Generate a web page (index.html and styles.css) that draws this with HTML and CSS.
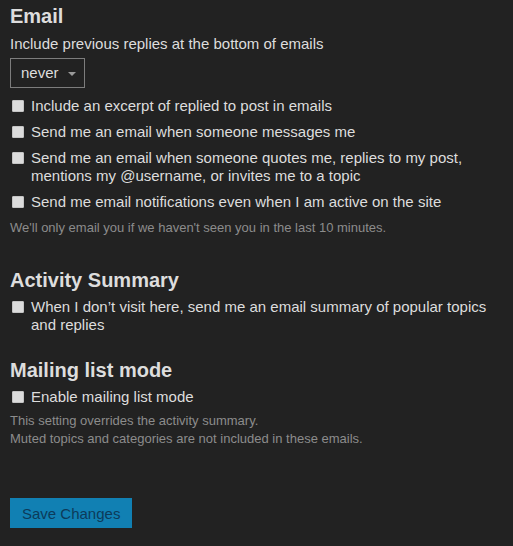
FILE: index.html
```html
<!DOCTYPE html>
<html>
<head>
<meta charset="utf-8">
<link rel="stylesheet" href="styles.css">
</head>
<body>
<div class="page">
  <h2 class="title first">Email</h2>
  <div class="label">Include previous replies at the bottom of emails</div>
  <div class="select">never <span class="caret"></span></div>
  <div class="rows">
    <label class="row"><span class="box"></span><span>Include an excerpt of replied to post in emails</span></label>
    <label class="row"><span class="box"></span><span>Send me an email when someone messages me</span></label>
    <label class="row"><span class="box"></span><span>Send me an email when someone quotes me, replies to my post,<br>mentions my @username, or invites me to a topic</span></label>
    <label class="row"><span class="box"></span><span>Send me email notifications even when I am active on the site</span></label>
  </div>
  <div class="hint hint1">We'll only email you if we haven't seen you in the last 10 minutes.</div>

  <h2 class="title t2">Activity Summary</h2>
  <label class="row"><span class="box"></span><span>When I don’t visit here, send me an email summary of popular topics<br>and replies</span></label>

  <h2 class="title t3">Mailing list mode</h2>
  <label class="row"><span class="box"></span><span>Enable mailing list mode</span></label>
  <div class="hint hint2">This setting overrides the activity summary.<br>Muted topics and categories are not included in these emails.</div>

  <button class="save">Save Changes</button>
</div>
</body>
</html>
```

FILE: styles.css
```css
html, body {
  margin: 0;
  padding: 0;
  background: #222222;
}
body {
  font-family: "Liberation Sans", Arial, sans-serif;
  color: #dddddd;
  font-size: 15px;
}
.page {
  padding: 4px 10px 0 10px;
  display: flex;
  flex-direction: column;
  align-items: flex-start;
}
.title {
  margin: 0;
  font-size: 20px;
  line-height: 24px;
  font-weight: bold;
  color: #dddddd;
}
.t2 { margin-top: 31px; }
.t3 { margin-top: 24px; }
.label {
  margin-top: 7px;
  line-height: 18px;
}
.select {
  margin-top: 5px;
  box-sizing: border-box;
  height: 30px;
  width: 75px;
  border: 1px solid #7d7d7d;
  padding-left: 10px;
  display: flex;
  align-items: center;
  gap: 9px;
  line-height: 18px;
}
.caret {
  width: 0;
  height: 0;
  border-left: 4px solid transparent;
  border-right: 4px solid transparent;
  border-top: 4px solid #9a9a9a;
  margin-top: 1px;
}
.rows {
  margin-top: 9px;
  display: flex;
  flex-direction: column;
  gap: 8px;
}
.row {
  display: flex;
  align-items: flex-start;
  line-height: 18px;
  margin-top: 6px;
}
.rows .row { margin-top: 0; }
.box {
  flex: none;
  box-sizing: border-box;
  width: 12px;
  height: 12px;
  margin: 3px 7px 0 2px;
  background: #dcdcdc;
  border: 1px solid #c4c4c4;
  border-radius: 1px;
}
.hint {
  font-size: 13px;
  line-height: 18px;
  color: #8c8c8c;
}
.hint1 { margin-top: 8px; }
.hint2 { margin-top: 6px; }
.save {
  margin-top: 50px;
  height: 30px;
  padding: 0 12px;
  background: #1180b3;
  color: #0c3b5a;
  border: none;
  font-family: "Liberation Sans", Arial, sans-serif;
  font-size: 15px;
}
```
